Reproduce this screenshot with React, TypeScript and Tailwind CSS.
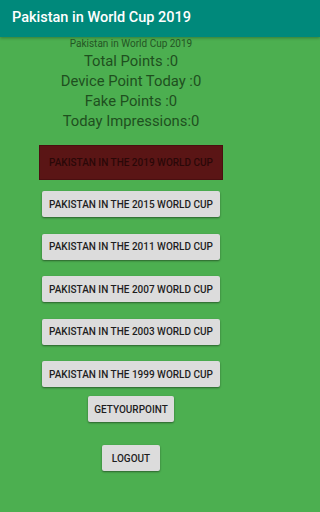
import React from "react";

const years = ["2015", "2011", "2007", "2003", "1999"];

export default function App() {
  return (
    <div className="w-full min-w-[262px] h-[512px] flex flex-col bg-[#4caf50] font-['Roboto',sans-serif] overflow-hidden">
      <div className="h-[37px] shrink-0 bg-[#00897b] flex items-center pl-[12px] shadow-[0_1px_3px_rgba(0,0,0,0.3)]">
        <span className="text-white text-[14.5px] font-medium leading-none">Pakistan in World Cup 2019</span>
      </div>
      <div className="w-[262px] flex flex-col items-center">
        <div className="text-[10px] leading-[14px] text-[#245524]">Pakistan in World Cup 2019</div>
        <div className="text-[14.8px] leading-[20px] text-[#1f4f1f]">Total Points :0</div>
        <div className="text-[14.8px] leading-[20px] text-[#1f4f1f]">Device Point Today :0</div>
        <div className="text-[14.8px] leading-[20px] text-[#1f4f1f]">Fake Points :0</div>
        <div className="text-[14.8px] leading-[20px] text-[#1f4f1f]">Today Impressions:0</div>
        <div className="mt-[14px] w-[184px] h-[35px] bg-[#5a1515] border border-[#4a0f10] flex items-center justify-center text-[10px] font-medium text-[#2a0808]">
          PAKISTAN IN THE 2019 WORLD CUP
        </div>
        <div className="flex flex-col items-center gap-[16.5px] mt-[11px]">
          {years.map((y) => (
            <div
              key={y}
              className="w-[178px] h-[26px] bg-[#dcdcdc] rounded-[2px] shadow-[0_1px_2px_rgba(0,0,0,0.45)] flex items-center justify-center text-[10px] font-medium text-[#1e1e1e]"
            >
              PAKISTAN IN THE {y} WORLD CUP
            </div>
          ))}
        </div>
        <div className="mt-[9px] w-[86px] h-[26px] bg-[#dcdcdc] rounded-[2px] shadow-[0_1px_2px_rgba(0,0,0,0.45)] flex items-center justify-center text-[10px] font-medium text-[#1e1e1e]">
          GETYOURPOINT
        </div>
        <div className="mt-[23px] w-[58px] h-[26px] bg-[#dcdcdc] rounded-[2px] shadow-[0_1px_2px_rgba(0,0,0,0.45)] flex items-center justify-center text-[10px] font-medium text-[#1e1e1e]">
          LOGOUT
        </div>
      </div>
    </div>
  );
}
